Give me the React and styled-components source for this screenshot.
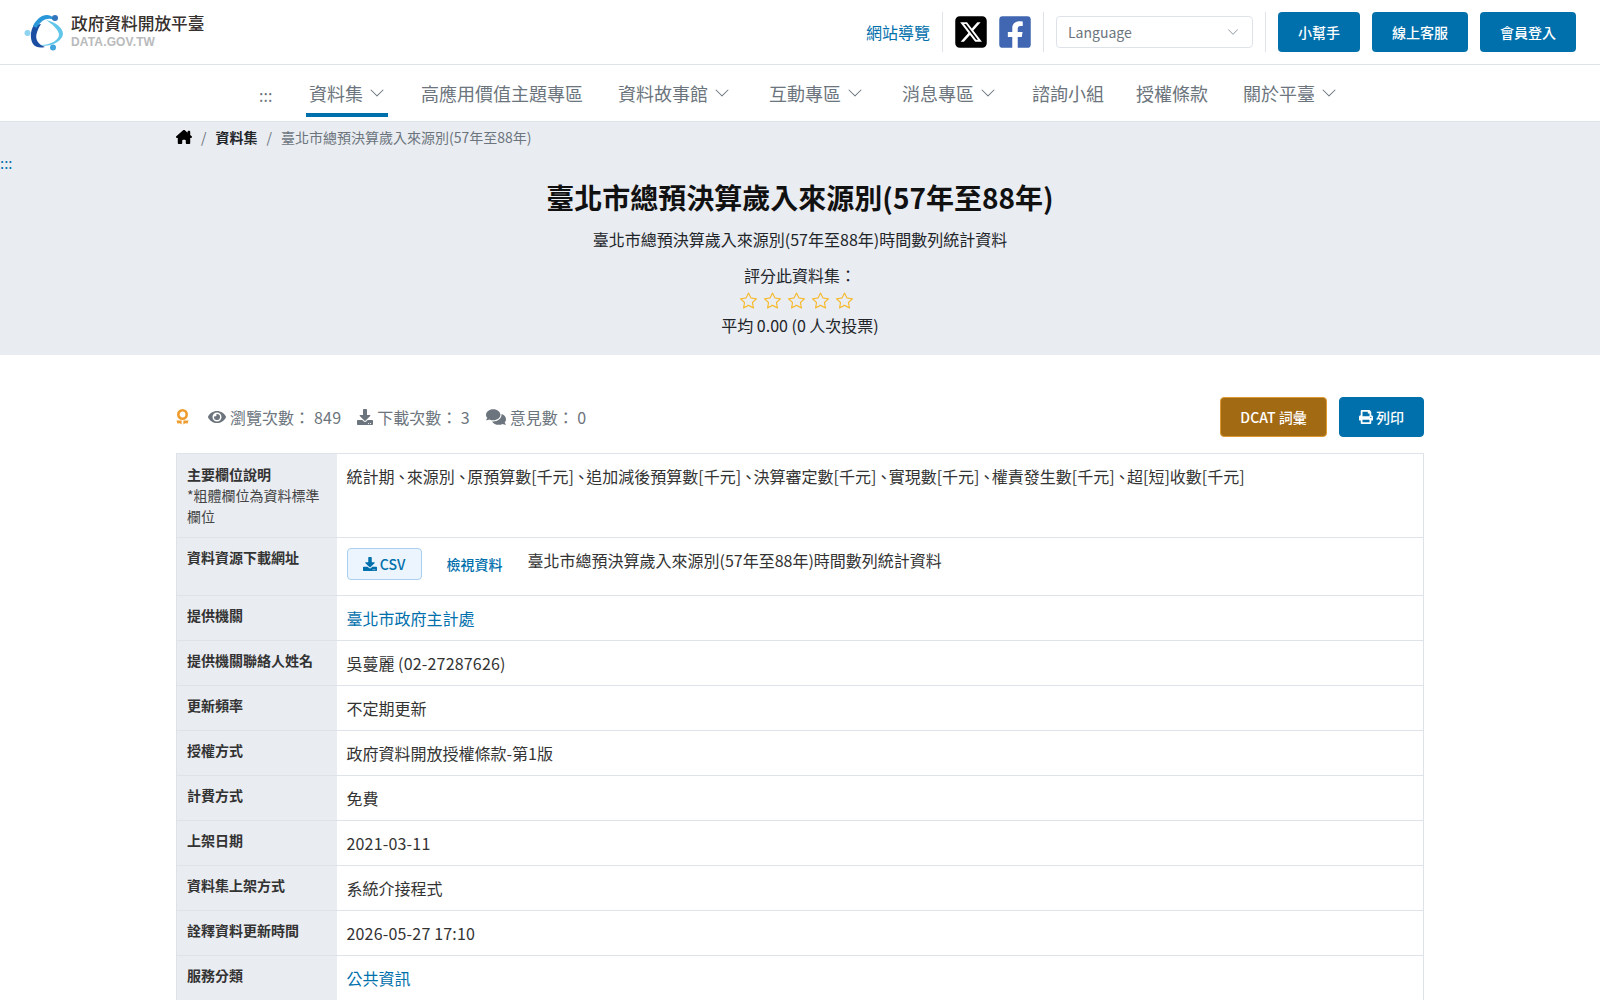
import React from "react";
import styled, { createGlobalStyle } from "styled-components";
import { BsChevronDown, BsStar } from "react-icons/bs";
import { FaComments, FaDownload, FaEye, FaFacebookSquare, FaPrint } from "react-icons/fa";
import { FaHouseChimney, FaSquareXTwitter } from "react-icons/fa6";

const BLUE = "#0070ac";
const FONT = `"Noto Sans CJK TC", "Noto Sans", sans-serif`;

const GlobalStyle = createGlobalStyle`
  html, body {
    margin: 0;
    height: 1000px;
    overflow: hidden;
    background: #fff;
  }
  body {
    font-family: ${FONT};
    font-size: 16px;
    line-height: 1.5;
    color: #212529;
  }
  * { box-sizing: border-box; }
  a { color: inherit; text-decoration: none; }
`;

const TopBar = styled.header`
  height: 65px;
  padding: 0 24px;
  display: flex;
  align-items: center;
  justify-content: space-between;
  border-bottom: 1px solid #dee2e9;
`;

const Brand = styled.a`
  display: flex;
  align-items: center;
  gap: 7px;
`;

const BrandText = styled.div`
  display: flex;
  flex-direction: column;
  margin-top: -5px;
  .zh {
    font-size: 16.7px;
    line-height: 24px;
    font-weight: 500;
    color: #36302e;
  }
  .en {
    font-family: "Liberation Sans", Arial, sans-serif;
    font-size: 12px;
    line-height: 14px;
    font-weight: 700;
    color: #b9babc;
    letter-spacing: 0.15px;
  }
`;

const TopActions = styled.div`
  display: flex;
  align-items: center;
  height: 40px;
`;

const SiteMap = styled.a`
  color: ${BLUE};
  font-size: 16px;
  margin-right: 12px;
`;

const Divider = styled.span`
  width: 1px;
  height: 40px;
  background: #dee2e9;
`;

const Social = styled.a`
  display: flex;
  margin-left: 12px;
  color: ${(p) => p.$color};
  svg { width: 32px; height: 36px; }
`;

const SocialEnd = styled(Divider)`
  margin-left: 12px;
`;

const LanguageSelect = styled.div`
  width: 197px;
  height: 32px;
  margin: 0 12px;
  padding: 0 13px 0 11px;
  display: flex;
  align-items: center;
  justify-content: space-between;
  border: 1px solid #dee2e9;
  border-radius: 4px;
  color: #6c757d;
  font-size: 14px;
  svg { font-size: 12px; color: #8f98a3; }
`;

const HelpButton = styled.a`
  height: 40px;
  display: flex;
  align-items: center;
  justify-content: center;
  width: ${(p) => p.$width}px;
  margin-left: 12px;
  background: ${BLUE};
  color: #fff;
  border-radius: 4px;
  font-size: 14px;
  font-weight: 500;
`;

const NavBar = styled.nav`
  height: 57px;
  padding-left: 259px;
  display: flex;
  align-items: flex-start;
  border-bottom: 1px solid #dee2e9;
`;

const Anchor = styled.a`
  width: 47px;
  height: 52px;
  font-size: 16px;
  line-height: 60px;
  color: #6c757d;
`;

const NavItem = styled.a`
  height: 52px;
  margin-right: ${(p) => p.$gap}px;
  padding: 8px 3px 0;
  display: flex;
  align-items: center;
  gap: 6px;
  color: #6c757d;
  font-size: 18px;
  border-bottom: 4px solid ${(p) => (p.$active ? BLUE : "transparent")};
  svg { font-size: 16px; margin-top: -1px; }
`;

const Hero = styled.section`
  height: 233px;
  background: #e9ecf1;
  position: relative;
`;

const HeroAnchor = styled.a`
  position: absolute;
  left: 0;
  top: 29px;
  color: ${BLUE};
  font-size: 15px;
  line-height: 24px;
`;

const Container = styled.div`
  width: 1248px;
  margin: 0 auto;
`;

const Crumbs = styled.ol`
  margin: 0;
  padding: 0;
  height: 30px;
  list-style: none;
  display: flex;
  align-items: center;
  font-size: 14px;
  color: #6c757d;
  li + li::before {
    content: "/";
    font-weight: 400;
    color: #6c757d;
    padding: 0 9px;
  }
`;

const Crumb = styled.li`
  display: flex;
  align-items: center;
  color: ${(p) => (p.$home ? "#000" : p.$strong ? "#212529" : "#6c757d")};
  font-weight: ${(p) => (p.$strong ? 700 : 400)};
  svg { font-size: 16px; }
`;

const HeroBody = styled.div`
  display: flex;
  flex-direction: column;
  align-items: center;
`;

const Title = styled.h1`
  margin: 23px 0 0;
  font-size: 28px;
  line-height: 45px;
  font-weight: 700;
  color: #111;
`;

const SubTitle = styled.p`
  margin: 7px 0 0;
  line-height: 24px;
`;

const RateLabel = styled.div`
  margin-top: 12px;
  line-height: 24px;
`;

const Stars = styled.div`
  display: flex;
  gap: 7px;
  height: 26px;
  margin-right: 8px;
  align-items: center;
  color: #f6b92b;
  font-size: 17px;
  svg { display: block; }
`;

const Average = styled.div`
  line-height: 24px;
`;

const StatsRow = styled.div`
  margin-top: 42px;
  height: 40px;
  display: flex;
  align-items: center;
  justify-content: space-between;
`;

const Stats = styled.div`
  display: flex;
  align-items: center;
  color: #6c757d;
`;

const Stat = styled.span`
  display: flex;
  align-items: center;
  margin-left: ${(p) => p.$left}px;
  gap: 4px;
  svg { font-size: ${(p) => p.$icon}px; }
`;

const ToolButtons = styled.div`
  display: flex;
  gap: 12px;
`;

const ToolButton = styled.a`
  height: 40px;
  width: ${(p) => p.$width}px;
  display: flex;
  align-items: center;
  justify-content: center;
  gap: 3px;
  background: ${(p) => p.$bg};
  border: 1px solid ${(p) => p.$border};
  border-radius: 4px;
  color: #fff;
  font-size: 14px;
  font-weight: 500;
`;

const InfoTable = styled.table`
  width: 100%;
  margin-top: 16px;
  border-collapse: collapse;
  table-layout: fixed;
  border: 1px solid #dee2e9;
  tr + tr { border-top: 1px solid #dee2e9; }
`;

const Row = styled.tr`
  height: ${(p) => p.$height || 45}px;
`;

const Head = styled.th`
  padding: ${(p) => p.$top || 9}px 10px 9px;
  background: #e9ecf1;
  font-size: 14px;
  font-weight: 700;
  text-align: left;
  vertical-align: top;
  color: #333;
  small {
    display: block;
    font-size: 14px;
    font-weight: 400;
    color: #444;
  }
`;

const Cell = styled.td`
  padding: 10px;
  vertical-align: top;
  font-size: 16px;
  color: #333;
`;

const Sep = styled.span`
  margin: 0 -3px 0 -0.7px;
`;

const Digits = styled.span`
  letter-spacing: 0.18px;
`;

const TextLink = styled.a`
  color: ${BLUE};
`;

const ResourceLine = styled.div`
  display: flex;
  align-items: flex-start;
`;

const CsvButton = styled.a`
  width: 75px;
  height: 32px;
  display: flex;
  align-items: center;
  justify-content: center;
  gap: 3px;
  background: #ecf4fd;
  border: 1px solid #a9d0f2;
  border-radius: 4px;
  color: ${BLUE};
  font-size: 14px;
  font-weight: 500;
`;

const ViewLink = styled.a`
  margin: 6px 25px 0 25px;
  font-size: 14px;
  font-weight: 500;
  color: ${BLUE};
`;

const ResourceName = styled.span`
  margin-top: 0;
`;

function LogoMark() {
  return (
    <svg width="40" height="38" viewBox="0 0 40 38" aria-hidden="true">
      <path d="M22 7 C32 9 39 15 39 21 C38 29 26 35 14 32 C25 33 36 27 35 21 C34 16 28 11 22 7Z" fill="#62c6ea" />
      <path d="M10 12 C6 18 6 26 9 31 C12 35 17 35 21 34 C15 32 11 27 12.5 21 C13.5 17 15 14 17 11Z" fill="#1b4ea3" />
      <path d="M9 13 C13 5 20 0 27 3 C29 4 30 5 30 7 C24 4 17 7 12.5 15Z" fill="#2a97d8" />
      <circle cx="31" cy="5" r="3" fill="#2f74bd" />
      <circle cx="3.5" cy="20" r="3" fill="#8ed3ef" />
      <circle cx="29" cy="34.5" r="3" fill="#43a5dd" />
    </svg>
  );
}

function MedalIcon() {
  return (
    <svg width="13" height="16" viewBox="0 0 13 16" aria-hidden="true">
      <circle cx="6.5" cy="5.5" r="4.2" fill="none" stroke="#ee9c2d" strokeWidth="2.6" />
      <path d="M0.5 11.5 H5.6 V15.5 L3.8 14.2 L1.4 14.6Z M12.5 11.5 H7.4 V15.5 L9.2 14.2 L11.6 14.6Z" fill="#ee9c2d" />
    </svg>
  );
}

const fields = ["統計期", "來源別", "原預算數[千元]", "追加減後預算數[千元]", "決算審定數[千元]", "實現數[千元]", "權責發生數[千元]", "超[短]收數[千元]"];

const rows = [
  ["提供機關", <TextLink href="#">臺北市政府主計處</TextLink>],
  ["提供機關聯絡人姓名", <>吳蔓麗 <Digits>(02-27287626)</Digits></>],
  ["更新頻率", "不定期更新"],
  ["授權方式", "政府資料開放授權條款-第1版"],
  ["計費方式", "免費"],
  ["上架日期", <Digits>2021-03-11</Digits>],
  ["資料集上架方式", "系統介接程式"],
  ["詮釋資料更新時間", <Digits>2026-05-27 17:10</Digits>],
  ["服務分類", <TextLink href="#">公共資訊</TextLink>],
];

export default function App() {
  return (
    <>
      <GlobalStyle />
      <TopBar>
        <Brand href="#">
          <LogoMark />
          <BrandText>
            <span className="zh">政府資料開放平臺</span>
            <span className="en">DATA.GOV.TW</span>
          </BrandText>
        </Brand>
        <TopActions>
          <SiteMap href="#">網站導覽</SiteMap>
          <Divider />
          <Social href="#" $color="#000"><FaSquareXTwitter /></Social>
          <Social href="#" $color="#4267b2"><FaFacebookSquare /></Social>
          <SocialEnd />
          <LanguageSelect>Language <BsChevronDown /></LanguageSelect>
          <Divider />
          <HelpButton href="#" $width={82}>小幫手</HelpButton>
          <HelpButton href="#" $width={96}>線上客服</HelpButton>
          <HelpButton href="#" $width={96}>會員登入</HelpButton>
        </TopActions>
      </TopBar>
      <NavBar>
        <Anchor href="#">:::</Anchor>
        <NavItem href="#" $active $gap={30}>資料集 <BsChevronDown /></NavItem>
        <NavItem href="#" $gap={29}>高應用價值主題專區</NavItem>
        <NavItem href="#" $gap={33}>資料故事館 <BsChevronDown /></NavItem>
        <NavItem href="#" $gap={33}>互動專區 <BsChevronDown /></NavItem>
        <NavItem href="#" $gap={30}>消息專區 <BsChevronDown /></NavItem>
        <NavItem href="#" $gap={26}>諮詢小組</NavItem>
        <NavItem href="#" $gap={29}>授權條款</NavItem>
        <NavItem href="#" $gap={0}>關於平臺 <BsChevronDown /></NavItem>
      </NavBar>
      <Hero>
        <HeroAnchor href="#">:::</HeroAnchor>
        <Container>
          <Crumbs>
            <Crumb $home><FaHouseChimney /></Crumb>
            <Crumb $strong>資料集</Crumb>
            <Crumb>臺北市總預決算歲入來源別(57年至88年)</Crumb>
          </Crumbs>
          <HeroBody>
            <Title>臺北市總預決算歲入來源別(57年至88年)</Title>
            <SubTitle>臺北市總預決算歲入來源別(57年至88年)時間數列統計資料</SubTitle>
            <RateLabel>評分此資料集：</RateLabel>
            <Stars>
              {[1, 2, 3, 4, 5].map((n) => <BsStar key={n} />)}
            </Stars>
            <Average>平均 0.00 (0 人次投票)</Average>
          </HeroBody>
        </Container>
      </Hero>
      <Container>
        <StatsRow>
          <Stats>
            <MedalIcon />
            <Stat $left={19} $icon={18}><FaEye /> 瀏覽次數： <Digits>849</Digits></Stat>
            <Stat $left={16} $icon={16}><FaDownload /> 下載次數： 3</Stat>
            <Stat $left={16} $icon={20}><FaComments /> 意見數： 0</Stat>
          </Stats>
          <ToolButtons>
            <ToolButton href="#" $width={107} $bg="#a36a14" $border="#dd9a33">DCAT 詞彙</ToolButton>
            <ToolButton href="#" $width={85} $bg={BLUE} $border={BLUE}><FaPrint /> 列印</ToolButton>
          </ToolButtons>
        </StatsRow>
        <InfoTable>
          <colgroup><col style={{ width: 160 }} /><col /></colgroup>
          <tbody>
            <Row $height={84}>
              <Head $top={10}>主要欄位說明<small>*粗體欄位為資料標準欄位</small></Head>
              <Cell>
                {fields.map((f, i) => (
                  <React.Fragment key={f}>{i > 0 && <Sep>、</Sep>}{f}</React.Fragment>
                ))}
              </Cell>
            </Row>
            <Row $height={58}>
              <Head>資料資源下載網址</Head>
              <Cell>
                <ResourceLine>
                  <CsvButton href="#"><FaDownload /> CSV</CsvButton>
                  <ViewLink href="#">檢視資料</ViewLink>
                  <ResourceName>臺北市總預決算歲入來源別(57年至88年)時間數列統計資料</ResourceName>
                </ResourceLine>
              </Cell>
            </Row>
            {rows.map(([label, value]) => (
              <Row key={label}>
                <Head>{label}</Head>
                <Cell>{value}</Cell>
              </Row>
            ))}
          </tbody>
        </InfoTable>
      </Container>
    </>
  );
}
